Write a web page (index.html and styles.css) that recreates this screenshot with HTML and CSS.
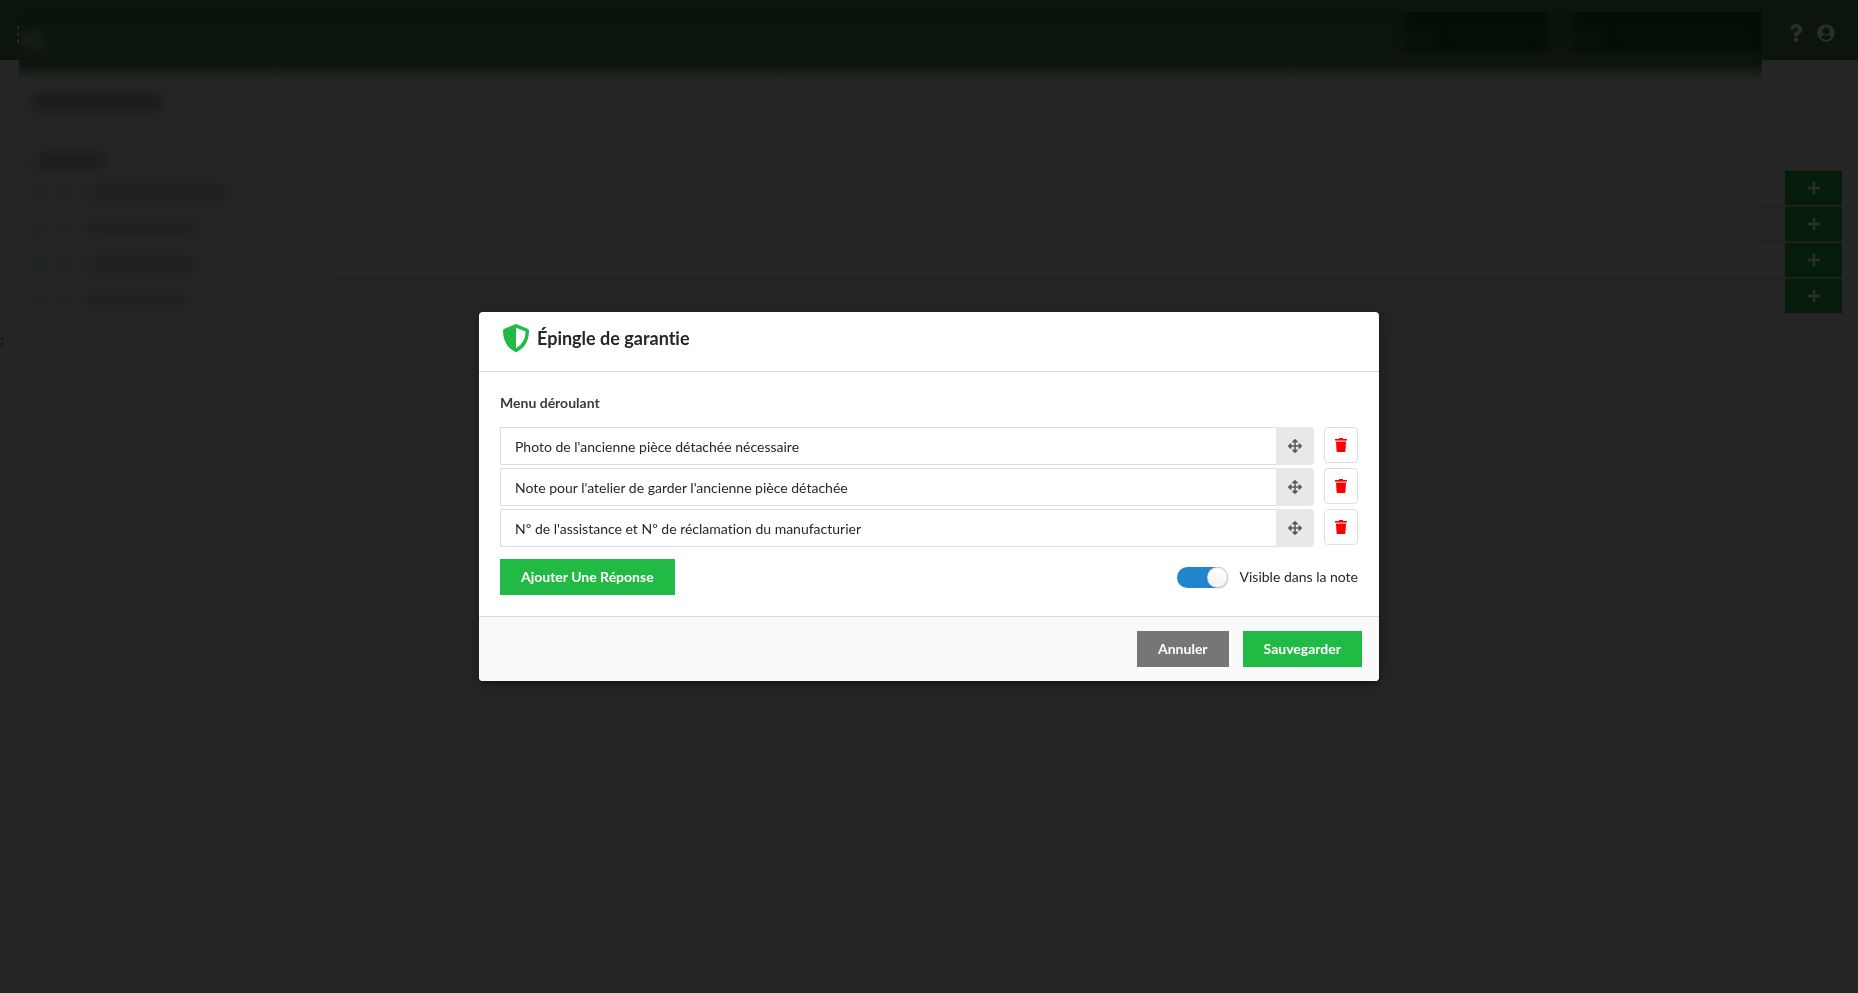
FILE: index.html
```html
<!DOCTYPE html>
<html lang="fr">
<head>
<meta charset="utf-8">
<title>Épingle de garantie</title>
<link rel="stylesheet" href="styles.css">
</head>
<body>
<svg class="sprite" aria-hidden="true">
  <symbol id="move" viewBox="0 0 512 512"><path d="M352 426l-79 79a24 24 0 0 1-34 0l-79-79c-15-15-4-41 17-41h51V284H127v51c0 21-26 32-41 17L7 273a24 24 0 0 1 0-34l79-79c15-15 41-4 41 17v51h101V127h-51c-21 0-32-26-17-41l79-79a24 24 0 0 1 34 0l79 79c15 15 4 41-17 41h-51v101h101v-51c0-21 26-32 41-17l79 79a24 24 0 0 1 0 34l-79 79c-15 15-41 4-41-17v-51H284v101h51c21 0 32 26 17 41z"/></symbol>
  <symbol id="trash" viewBox="0 0 12 14"><path d="M0 1h4V0h4v1h4v1.600H0zM1 4h10l-.6 9.200a.9.9 0 0 1-.9.8h-7a.9.9 0 0 1-.9-.8z"/><path opacity=".45" d="M.6 2.600h10.800v1.400H.6z"/></symbol>
  <symbol id="plus" viewBox="0 0 12 12"><path d="M4.800 0h2.400v4.800H12v2.400H7.200V12H4.800V7.200H0V4.800h4.800z"/></symbol>
</svg>
<div class="page" aria-hidden="true">
  <header class="topbar">
    <span class="dots"></span>
    <span class="smudge logo"></span>
    <span class="spacer"></span>
    <span class="action action-small"><span class="smudge mark"></span><span class="smudge caption"></span></span>
    <span class="action action-large"><span class="smudge mark"></span><span class="smudge caption"></span></span>
    <span class="topicons">
      <svg class="help" viewBox="0 0 384 512"><path d="M202 0C122 0 70 33 29 92c-8 11-5 25 5 33l43 33c11 8 26 6 35-4 25-32 44-50 83-50 31 0 69 20 69 50 0 22-19 34-49 51-35 20-82 45-82 106v10c0 13 11 24 24 24h72c13 0 24-11 24-24v-6c0-43 124-45 124-161C377 66 286 0 202 0zM192 374a69 69 0 1 0 0 138 69 69 0 0 0 0-138z"/></svg>
      <svg class="user" viewBox="0 0 496 512"><path fill-rule="evenodd" d="M248 8a248 248 0 1 0 0 496 248 248 0 0 0 0-496zM248 100a100 100 0 1 1 0 200 100 100 0 0 1 0-200zM248 448c-59 0-111-26-147-68 19-32 50-50 90-50 16 6 32 10 57 10s41-4 57-10c40 0 71 18 90 50-36 42-88 68-147 68z"/></svg>
    </span>
  </header>
  <div class="content">
    <span class="smudge heading"></span>
    <span class="smudge subheading"></span>
    <div class="rows">
      <div class="row"><span class="smudge icon"></span><span class="smudge icon"></span><span class="smudge label label-a"></span><span class="add"><svg><use href="#plus"/></svg></span></div>
      <div class="row"><span class="smudge icon"></span><span class="smudge icon"></span><span class="smudge label label-b"></span><span class="add"><svg><use href="#plus"/></svg></span></div>
      <div class="row"><span class="smudge icon"></span><span class="smudge icon"></span><span class="smudge label label-b"></span><span class="add"><svg><use href="#plus"/></svg></span></div>
      <div class="row"><span class="smudge icon"></span><span class="smudge icon"></span><span class="smudge label label-c"></span><span class="add"><svg><use href="#plus"/></svg></span></div>
    </div>
    <p class="stray">;</p>
  </div>
  <div class="frost"></div>
</div>
<div class="dimmer">
  <form class="modal" role="dialog" aria-labelledby="title">
    <header class="modal-head">
      <svg class="shield" viewBox="0 0 26 28"><path fill-rule="evenodd" d="M13 0 24.600 4.700Q26 5.300 26 7C26 16 22 24 14 27.700Q13 28.200 12 27.700C4 24 0 16 0 7Q0 5.300 1.400 4.700zM13 3.700V24.300C19 21 22.600 14.600 22.600 7.600z"/></svg>
      <h1 id="title">Épingle de garantie</h1>
    </header>
    <div class="modal-body">
      <h2>Menu déroulant</h2>
      <ul class="answers">
        <li><input type="text" aria-label="Réponse 1" value="Photo de l'ancienne pièce détachée nécessaire"><button type="button" class="drag" aria-label="Déplacer"><svg><use href="#move"/></svg></button><button type="button" class="delete" aria-label="Supprimer"><svg><use href="#trash"/></svg></button></li>
        <li><input type="text" aria-label="Réponse 2" value="Note pour l'atelier de garder l'ancienne pièce détachée"><button type="button" class="drag" aria-label="Déplacer"><svg><use href="#move"/></svg></button><button type="button" class="delete" aria-label="Supprimer"><svg><use href="#trash"/></svg></button></li>
        <li><input type="text" aria-label="Réponse 3" value="Nº de l'assistance et Nº de réclamation du manufacturier"><button type="button" class="drag" aria-label="Déplacer"><svg><use href="#move"/></svg></button><button type="button" class="delete" aria-label="Supprimer"><svg><use href="#trash"/></svg></button></li>
      </ul>
      <div class="options">
        <button type="button" class="btn green">Ajouter Une Réponse</button>
        <label class="toggle" for="visible"><input type="checkbox" id="visible" checked>Visible dans la note</label>
      </div>
    </div>
    <footer class="modal-foot">
      <button type="button" class="btn grey">Annuler</button>
      <button type="submit" class="btn green">Sauvegarder</button>
    </footer>
  </form>
</div>
</body>
</html>
```
FILE: styles.css
```css
* { box-sizing: border-box; }
body {
  margin: 0;
  min-height: 100vh;
  background: #252525;
  color: #262727;
  font: 14px/20px Lato, sans-serif;
  font-variant-ligatures: none;
}
button, input { font: inherit; font-variant-ligatures: none; }
.sprite { display: none; }

/* Page behind the dialog */
.page { position: relative; }
.topbar {
  display: flex;
  align-items: center;
  height: 60px;
  padding-left: 17px;
  background: #0b150b;
}
.dots {
  width: 2px;
  height: 17px;
  margin-top: 8px;
  background: repeating-linear-gradient(#262b28 0 3px, transparent 3px 7px);
}
.smudge { display: block; border-radius: 4px; background: #191919; }
.logo { width: 20px; height: 14px; margin: 20px 0 0 4px; background: #1a221a; }
.spacer { flex: 1; }
.action {
  display: flex;
  align-items: center;
  gap: 14px;
  height: 48px;
  margin: 12px 28px 0 0;
  padding: 0 10px;
  background: #030d04;
}
.action-small { width: 140px; }
.action-large { width: 186px; }
.mark { width: 14px; height: 14px; background: #0c1a10; }
.caption { flex: 1; height: 8px; background: #07130a; }
.topicons {
  display: flex;
  align-items: center;
  gap: 14px;
  padding-right: 23px;
  margin-top: 6px;
}
.topicons svg { height: 18px; fill: #2b2d2b; }
.help { width: 14px; }
.user { width: 18px; }
.content { padding: 34px 16px 0 15px; }
.heading { width: 130px; height: 16px; margin-left: 18px; }
.subheading { width: 70px; height: 12px; margin: 44px 0 0 20px; }
.rows { margin-top: 4px; border-left: 1px solid #212121; }
.row {
  display: flex;
  align-items: center;
  gap: 12px;
  height: 36px;
  padding-left: 18px;
  border-top: 1px solid #202020;
  border-bottom: 1px solid #202020;
}
.icon { width: 12px; height: 10px; margin-top: 8px; background: #152415; }
.label { height: 8px; margin: 8px 0 0 4px; background: #191919; }
.label-a { width: 142px; }
.label-b { width: 112px; }
.label-c { width: 100px; }
.add {
  display: flex;
  align-items: center;
  justify-content: center;
  width: 57px;
  height: 34px;
  margin-left: auto;
  background: #051c0b;
}
.add svg { width: 12px; height: 12px; fill: #2b2d2b; }
.stray { margin: 16px 0 0 -15px; color: #0d1215; font-weight: 700; }
.frost {
  position: absolute;
  top: 12px;
  right: 96px;
  left: 19px;
  height: 318px;
  backdrop-filter: blur(7px);
  background: linear-gradient(transparent 38px, #0b150b 48px, #0b150b 50px, transparent 68px);
  clip-path: polygon(0 0, 100% 0, 100% 258px, 319px 258px, 319px 100%, 0 100%);
}

/* Dialog */
.dimmer {
  position: fixed;
  inset: 0;
  display: flex;
  align-items: center;
  justify-content: center;
}
.modal {
  width: 900px;
  max-width: 95%;
  overflow: hidden;
  border-radius: 4px;
  background: #fff;
  box-shadow: 1px 3px 3px rgba(0, 0, 0, .2), 1px 3px 15px 2px rgba(0, 0, 0, .2);
}
.modal-head {
  display: flex;
  align-items: center;
  gap: 8px;
  height: 60px;
  padding: 0 24px 8px;
  border-bottom: 1px solid #dcddde;
}
.shield { width: 26px; height: 28px; fill: #21ba45; }
h1 { margin: 0; font-size: 18px; line-height: 24px; }
.modal-body { padding: 21px; }
h2 { margin: 0 0 14px; font-size: 14px; line-height: 20px; color: #3a3b3b; }
.answers {
  display: grid;
  gap: 3px;
  margin: 0 0 12px;
  padding: 0;
  list-style: none;
}
.answers li { display: flex; }
.answers input {
  flex: 1;
  min-width: 0;
  height: 38px;
  padding: 0 14px;
  border: 1px solid #dcddde;
  border-right: 0;
  background: #fff;
  color: #262727;
}
.drag {
  display: grid;
  place-items: center;
  width: 38px;
  height: 38px;
  padding: 0;
  border: 0;
  border-radius: 0 4px 4px 0;
  background: #e8e8e8;
}
.drag svg { width: 14px; height: 14px; fill: #5a5a5a; }
.delete {
  display: grid;
  place-items: center;
  width: 34px;
  height: 36px;
  margin-left: 10px;
  padding: 0;
  border: 1px solid #dedfdf;
  border-radius: 4px;
  background: #fff;
}
.delete svg { width: 12px; height: 14px; fill: #f00; }
.options { display: flex; align-items: center; justify-content: space-between; }
.btn {
  height: 36px;
  padding: 0 21px;
  border: 0;
  color: #fff;
  font-weight: 700;
}
.green { background: #21ba45; }
.grey { background: #767676; }
.toggle { display: flex; align-items: center; gap: 12px; }
.toggle input {
  appearance: none;
  display: flex;
  justify-content: flex-end;
  width: 51px;
  height: 21px;
  margin: 0;
  border-radius: 11px;
  background: #2185d0;
}
.toggle input::before {
  content: "";
  width: 21px;
  height: 21px;
  border-radius: 50%;
  background: linear-gradient(#fff, #f2f2f2);
  box-shadow: 0 1px 2px rgba(34, 36, 38, .15), inset 0 0 0 1px rgba(34, 36, 38, .15);
}
.modal-foot {
  display: flex;
  justify-content: flex-end;
  gap: 14px;
  padding: 14px 17px;
  border-top: 1px solid #d8dadc;
  background: #f9fafb;
}
```
